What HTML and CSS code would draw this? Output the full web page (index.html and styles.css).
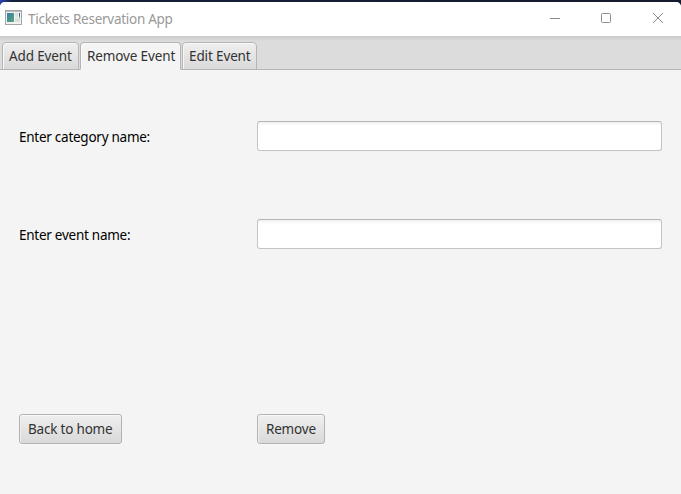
FILE: index.html
```html
<!DOCTYPE html>
<html lang="en">
<head>
<meta charset="utf-8">
<title>Tickets Reservation App</title>
<link rel="stylesheet" href="styles.css">
</head>
<body>
<div class="window">
  <header class="titlebar">
    <svg class="app-icon" width="17" height="15" viewBox="0 0 17 15">
      <defs><linearGradient id="pic" x1="0" y1="0" x2="1" y2="1"><stop offset="0" stop-color="#3d7cab"/><stop offset="1" stop-color="#55a878"/></linearGradient></defs>
      <rect x=".5" y=".5" width="16" height="14" fill="#f3f3f3" stroke="#a3a5a7"/>
      <path d="M1 1.5h15" stroke="#b9bcbe"/>
      <rect x="2" y="3" width="7" height="9" fill="url(#pic)"/>
      <path d="M10 3h3v4h-3zM10 8h5v4h-5z" fill="#dedede"/>
      <path d="M14.5 3v3" stroke="#345e98"/>
      <path d="M14.5 6v2" stroke="#60a875"/>
    </svg>
    <span class="title">Tickets Reservation App</span>
    <svg class="controls" width="114" height="12" viewBox="0 0 114 12" fill="none" stroke="#8c8c8c">
      <path d="M0 6.5h10"/>
      <rect x="51.5" y="1.5" width="9" height="9" rx="1"/>
      <path d="M103 1l10 10M113 1l-10 10"/>
    </svg>
  </header>
  <nav class="tabs">
    <div class="tab tab-add"><span>Add Event</span></div>
    <div class="tab tab-remove active"><span>Remove Event</span></div>
    <div class="tab tab-edit"><span>Edit Event</span></div>
  </nav>
  <main class="form">
    <label class="category-label" for="category">Enter category name:</label>
    <input id="category" type="text">
    <label class="event-label" for="event">Enter event name:</label>
    <input id="event" type="text">
    <button class="back" type="button">Back to home</button>
    <button class="remove" type="button">Remove</button>
  </main>
</div>
</body>
</html>
```
FILE: styles.css
```css
* { box-sizing: border-box; }
body {
  margin: 0;
  overflow: hidden;
  background: linear-gradient(90deg, #2b45b5 0, #15203b 12px, #151b2e 100%);
  font: 13.5px/18px "Noto Sans", sans-serif;
}
.window {
  height: 492px;
  margin-top: 2px;
  display: flex;
  flex-direction: column;
  background: #f4f4f4;
  border-radius: 5px 5px 0 0;
  overflow: hidden;
}
.titlebar {
  height: 34px;
  padding: 0 17px 2px 5px;
  display: flex;
  align-items: center;
  background: #fff;
  color: #999;
}
.app-icon { margin-bottom: 1px; }
.title {
  margin: 2px 0 0 6px;
  letter-spacing: -.27px;
  white-space: nowrap;
}
.controls { margin-left: auto; }
.tabs {
  height: 34px;
  padding: 6px 2px 0;
  display: flex;
  gap: 1px;
  background: linear-gradient(#cbcbcb, #dcdcdc 5px);
  box-shadow: inset 0 -1px #b5b5b5;
}
.tab {
  height: 28px;
  padding: 4px 0 0 6px;
  border: 1px solid #b5b5b5;
  border-radius: 4px 4px 0 0;
  background: linear-gradient(#efefef, #d9d9d9);
  box-shadow: inset 1px 1px #f8f8f8;
  color: #323232;
  letter-spacing: -.13px;
  white-space: nowrap;
}
.tab-add { width: 77px; }
.tab-remove { width: 101px; }
.tab-edit { width: 75px; }
.tab.active { background: #f4f4f4; border-bottom-color: #f4f4f4; }
.form {
  flex: 1;
  padding: 51px 19px 0;
  display: grid;
  grid-template-columns: 238px 405px;
  grid-template-rows: 98px 195px 30px;
  color: #000;
}
label {
  padding-top: 7px;
  letter-spacing: -.26px;
  white-space: nowrap;
}
input {
  width: 405px;
  height: 30px;
  border: 1px solid #c4c4c4;
  border-top-color: #b5b5b5;
  border-radius: 3px;
  background: linear-gradient(#f0f0f0, #fff 4px);
  outline: none;
}
button {
  height: 30px;
  padding: 0 0 0 8px;
  border: 1px solid #b3b3b3;
  border-radius: 3px;
  background: linear-gradient(#efefef, #d9d9d9);
  box-shadow: inset 0 1px #f9f9f9, inset 1px 0 #eee, 0 1px #f8f8f8;
  color: #323232;
  font: inherit;
  letter-spacing: -.2px;
  text-align: left;
  white-space: nowrap;
}
.back { width: 103px; }
.remove { width: 68px; }
```
